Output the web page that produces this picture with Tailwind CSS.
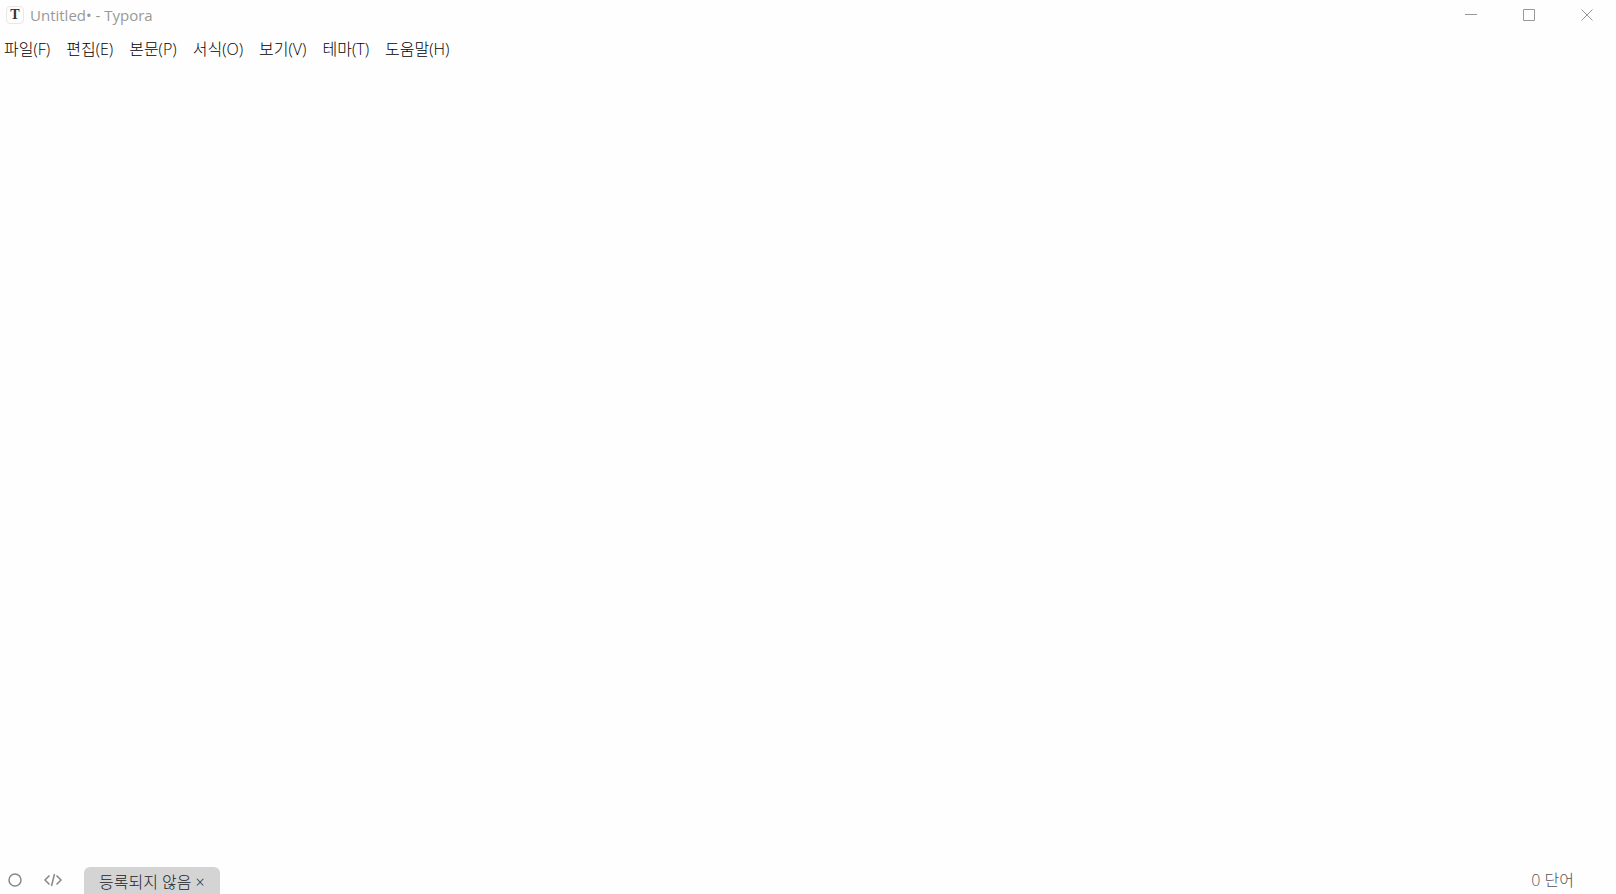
<!DOCTYPE html>
<html lang="ko">
<head>
    <meta charset="UTF-8">
    <meta name="viewport" content="width=device-width, initial-scale=1.0">
    <title>Untitled• - Typora</title>
    <script src="https://cdn.jsdelivr.net/npm/@tailwindcss/browser@4"></script>
</head>
<body class="h-screen flex flex-col overflow-hidden bg-[#fefefe] font-['Open_Sans','Noto_Sans_CJK_KR',sans-serif]">
    <!-- title bar -->
    <header class="flex h-8 items-start justify-between text-[#999999]">
        <div class="flex h-[30px] items-center gap-1.5 pl-1.5">
            <span class="flex h-[18px] w-[18px] items-center justify-center rounded border border-[#e8e8e8] bg-[#fdfdfd] font-['Liberation_Serif',serif] text-sm leading-4 font-bold text-[#333333]" aria-hidden="true">T</span>
            <h1 class="text-[15px] leading-5">Untitled• - Typora</h1>
        </div>
        <div class="flex h-[30px]">
            <button class="flex w-[58px] items-center justify-center" aria-label="최소화">
                <svg class="h-3 w-3" viewBox="0 0 12 12" fill="none" stroke="currentColor"><path d="M0 5.5h12"/></svg>
            </button>
            <button class="flex w-[58px] items-center justify-center" aria-label="최대화">
                <svg class="h-3 w-3" viewBox="0 0 12 12" fill="none" stroke="currentColor"><path d="M.5.5h11v11H.5z"/></svg>
            </button>
            <button class="flex w-[58px] items-center justify-center" aria-label="닫기">
                <svg class="h-3 w-3" viewBox="0 0 12 12" fill="none" stroke="currentColor"><path d="M.5.5l11 11M11.5.5l-11 11"/></svg>
            </button>
        </div>
    </header>

    <!-- menu -->
    <nav class="flex h-[34px] items-center gap-4 pl-1 text-base leading-5 font-light text-black">
        <button>파일(F)</button>
        <button>편집(E)</button>
        <button>본문(P)</button>
        <button>서식(O)</button>
        <button>보기(V)</button>
        <button>테마(T)</button>
        <button>도움말(H)</button>
    </nav>

    <!-- editor -->
    <main class="flex-1 outline-none" contenteditable="true" aria-label="본문"></main>

    <!-- status bar -->
    <footer class="flex h-7 items-end justify-between pr-[42px] text-[#555555]">
        <div class="flex items-end">
            <button class="flex h-7 items-center pl-2" aria-label="사이드바">
                <svg class="h-[14px] w-[14px]" viewBox="0 0 14 14" fill="none" stroke="#888888" stroke-width="1.5"><circle cx="7" cy="7" r="6"/></svg>
            </button>
            <button class="flex h-7 items-center pl-[21px]" aria-label="소스 코드 모드">
                <svg class="h-[14px] w-5" viewBox="0 0 20 14" fill="none" stroke="#888888" stroke-width="1.5"><path d="M6.5 2.5L2 7l4.500 4.500M13.500 2.500L18 7l-4.500 4.500M11.500 1l-3 12"/></svg>
            </button>
            <button class="ml-[21px] flex h-[27px] items-center gap-1 rounded-t-md bg-[#d4d4d4] px-[15px] pt-0.5 text-base leading-5 font-light text-[#222222]">
                <span>등록되지 않음</span>
                <span>×</span>
            </button>
        </div>
        <button class="h-7 text-base leading-7 font-light">0 단어</button>
    </footer>
</body>
</html>
